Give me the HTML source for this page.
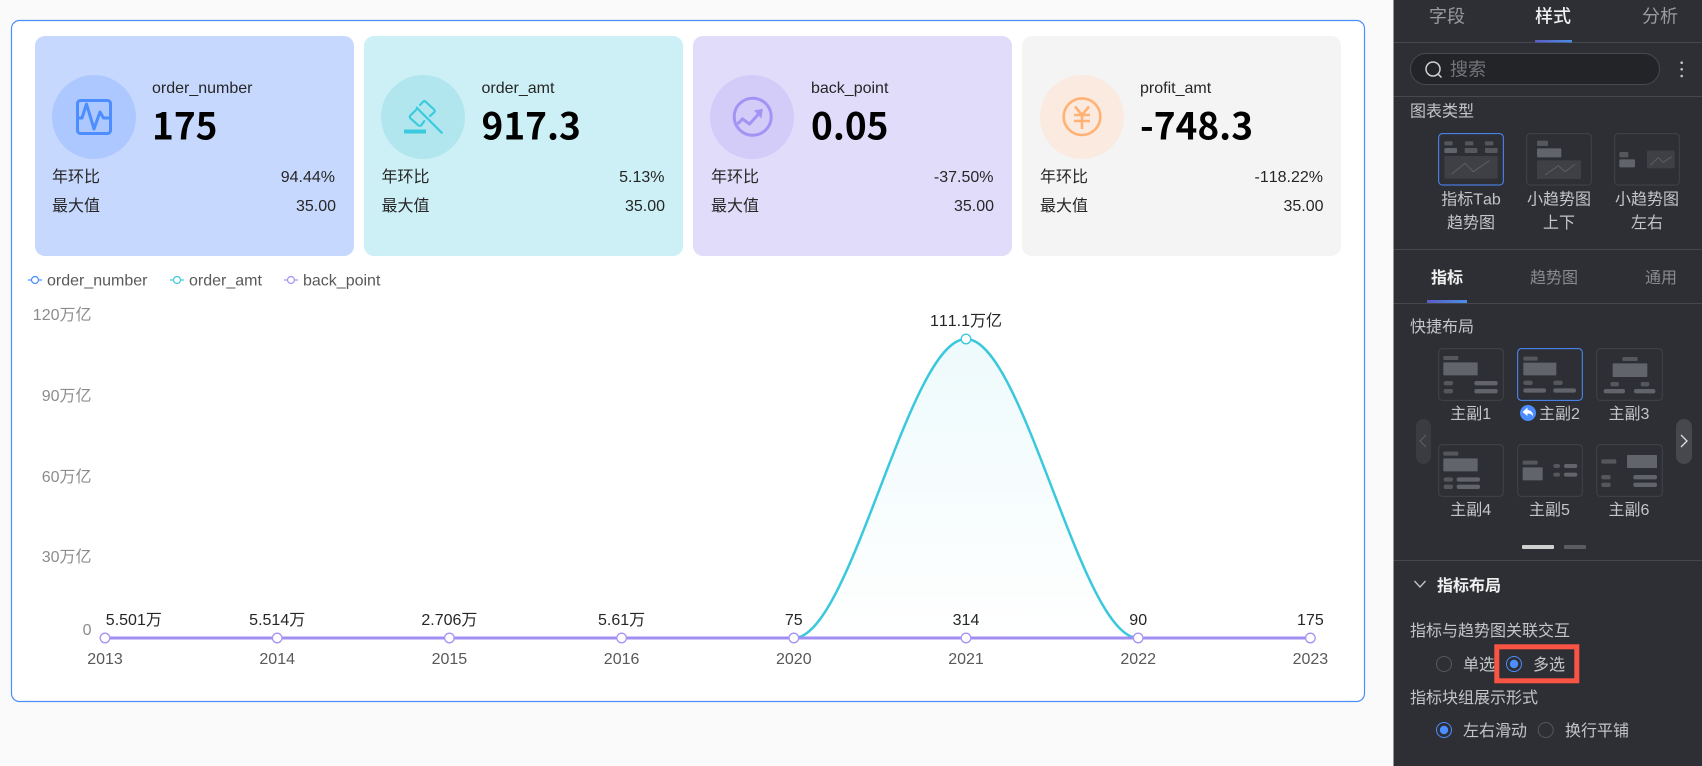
<!DOCTYPE html>
<html lang="zh-CN">
<head>
<meta charset="utf-8">
<title>指标趋势图</title>
<style>
html,body{margin:0;padding:0;width:1702px;height:766px;overflow:hidden;background:#fafafa}
svg{display:block}
text{font-family:"Liberation Sans","Noto Sans CJK SC",sans-serif;font-size:16px;font-kerning:none}
.d{fill:#262626}
.v{font-family:"Noto Sans CJK SC","Liberation Sans",sans-serif;font-size:37px;font-weight:700;fill:#000}
.y{fill:#8c8c8c;text-anchor:end}
.x{fill:#595959;text-anchor:middle}
.l{fill:#262626;text-anchor:middle}
.lg{fill:#595959}
.s{fill:#c4c5c8}
.sc{fill:#c4c5c8;text-anchor:middle}
.th{fill:none;stroke:#414349;stroke-width:3}
.on{fill:none;stroke:#4c8dff;stroke-width:3}
.a{fill:#55575c}
.b{fill:#62646b}
.c{fill:#3e4045}
.ln{fill:none;stroke:#5c5e63;stroke-width:3}
</style>
</head>
<body>
<svg width="1702" height="766" viewBox="0 0 1702 766" xmlns="http://www.w3.org/2000/svg">
<defs>
<linearGradient id="area" x1="0" y1="0" x2="0" y2="1"><stop offset="0" stop-color="#eefafc"/><stop offset="1" stop-color="#ffffff"/></linearGradient>
<linearGradient id="ind" x1="0" y1="0" x2="1" y2="0"><stop offset="0" stop-color="#5a5cc4"/><stop offset="1" stop-color="#4a8ee8"/></linearGradient>
</defs>
<rect width="1702" height="766" fill="#fafafa"/>

<!-- main card -->
<rect x="11.5" y="20.5" width="1353" height="681" rx="8" fill="#fff" stroke="#4c8dff" stroke-width="1.2"/>

<!-- KPI cards -->
<rect x="35" y="36" width="319" height="220" rx="10" fill="#c7d8ff"/>
<rect x="364" y="36" width="319" height="220" rx="10" fill="#ccf0f5"/>
<rect x="693" y="36" width="319" height="220" rx="10" fill="#e2dcfb"/>
<rect x="1022" y="36" width="319" height="220" rx="10" fill="#f4f4f4"/>

<circle cx="94" cy="117" r="42" fill="#adc7ff"/>
<circle cx="423" cy="117" r="42" fill="#b1e6ef"/>
<circle cx="752" cy="117" r="42" fill="#d4ccf8"/>
<circle cx="1082" cy="117" r="42" fill="#fbeae0"/>

<!-- icon 1 -->
<g fill="none" stroke="#4c8dff" stroke-width="3" stroke-linejoin="round" stroke-linecap="round">
<rect x="77.5" y="100.5" width="33" height="33" rx="3"/>
<path d="M78 118h4l4.500-14 7.500 25 6-17 3.500 6h6"/>
</g>
<!-- icon 2 -->
<g fill="none" stroke="#3ccbde" stroke-width="2.200" stroke-linecap="round" stroke-linejoin="round">
<path d="M420 105l2.800-3q1.500-1.500 3-.2l8.200 7.700q1.500 1.500 0 3l-4 3.500"/>
<path d="M416 110l-5.500 5.300q-1.500 1.500 0 3l7.800 7q1.500 1.200 3 0l3-4.300"/>
<path d="M416.700 107.700l25 25"/>
</g>
<rect x="404" y="129.500" width="22" height="4" fill="#3ccbde"/>
<!-- icon 3 -->
<circle cx="752.700" cy="116.700" r="18.500" fill="none" stroke="#a393f5" stroke-width="3"/>
<path d="M737.500 124l5-5 7 5 10-11" fill="none" stroke="#a393f5" stroke-width="3"/>
<path d="M755 110.700l7.300-1.300-1.300 8z" fill="#a393f5" stroke="#a393f5" stroke-width="1"/>
<!-- icon 4 -->
<g fill="none" stroke="#ffb273" stroke-width="2.600">
<circle cx="1082" cy="116.700" r="18.300"/>
<path d="M1075 106.500l7 8.500 7-8.500M1074 115h16M1074 121h16M1082 115v14"/>
</g>

<!-- card text -->
<text x="152" y="93" class="d">order_number</text>
<text x="152" y="139.500" class="v">175</text>
<text x="52" y="182" class="d">年环比</text><text x="335" y="182" class="d" text-anchor="end">94.44%</text>
<text x="52" y="211" class="d">最大值</text><text x="336" y="211" class="d" text-anchor="end">35.00</text>

<text x="481.500" y="93" class="d">order_amt</text>
<text x="481.500" y="139.500" class="v">917.3</text>
<text x="381.500" y="182" class="d">年环比</text><text x="664.500" y="182" class="d" text-anchor="end">5.13%</text>
<text x="381.500" y="211" class="d">最大值</text><text x="665" y="211" class="d" text-anchor="end">35.00</text>

<text x="811" y="93" class="d">back_point</text>
<text x="811" y="139.500" class="v">0.05</text>
<text x="711" y="182" class="d">年环比</text><text x="993.500" y="182" class="d" text-anchor="end">-37.50%</text>
<text x="711" y="211" class="d">最大值</text><text x="994" y="211" class="d" text-anchor="end">35.00</text>

<text x="1140" y="93" class="d">profit_amt</text>
<text x="1140" y="139.500" class="v">-748.3</text>
<text x="1040" y="182" class="d">年环比</text><text x="1323" y="182" class="d" text-anchor="end">-118.22%</text>
<text x="1040" y="211" class="d">最大值</text><text x="1323.500" y="211" class="d" text-anchor="end">35.00</text>

<!-- legend -->
<g fill="#fff" stroke-width="1.200">
<path d="M28 280h14" stroke="#4c8dff"/><circle cx="35" cy="280" r="3.500" stroke="#4c8dff"/>
<path d="M170 280h14" stroke="#3ccbde"/><circle cx="177" cy="280" r="3.500" stroke="#3ccbde"/>
<path d="M284 280h14" stroke="#a393f5"/><circle cx="291" cy="280" r="3.500" stroke="#a393f5"/>
</g>
<text x="47" y="285.500" class="lg">order_number</text>
<text x="189" y="285.500" class="lg">order_amt</text>
<text x="303" y="285.500" class="lg">back_point</text>

<!-- y axis -->
<text x="91.500" y="320" class="y">120万亿</text>
<text x="91.500" y="401" class="y">90万亿</text>
<text x="91.500" y="482" class="y">60万亿</text>
<text x="91.500" y="562" class="y">30万亿</text>
<text x="91.500" y="635" class="y">0</text>

<!-- chart -->
<path d="M793.800 638C851 638 908.500 339 966 339C1023.500 339 1081 638 1138.200 638Z" fill="url(#area)"/>
<path d="M793.800 638C851 638 908.500 339 966 339C1023.500 339 1081 638 1138.200 638" fill="none" stroke="#3ac8dc" stroke-width="2.500"/>
<path d="M105 638H1310.400" stroke="#a08ef2" stroke-width="3" fill="none"/>
<g fill="#fff" stroke="#a793f5" stroke-width="1.300">
<circle cx="105" cy="638" r="4.800"/><circle cx="277.200" cy="638" r="4.800"/><circle cx="449.400" cy="638" r="4.800"/><circle cx="621.600" cy="638" r="4.800"/><circle cx="793.800" cy="638" r="4.800"/><circle cx="966" cy="638" r="4.800"/><circle cx="1138.200" cy="638" r="4.800"/><circle cx="1310.400" cy="638" r="4.800"/>
</g>
<circle cx="966" cy="339" r="4.800" fill="#fff" stroke="#3ac8dc" stroke-width="1.300"/>

<text x="105.800" y="625" class="d">5.501万</text>
<text x="277.200" y="625" class="l">5.514万</text>
<text x="449.400" y="625" class="l">2.706万</text>
<text x="621.600" y="625" class="l">5.61万</text>
<text x="793.800" y="625" class="l">75</text>
<text x="966" y="625" class="l">314</text>
<text x="1138.200" y="625" class="l">90</text>
<text x="1310.400" y="625" class="l">175</text>
<text x="966" y="326" class="l">111.1万亿</text>

<text x="105" y="664" class="x">2013</text>
<text x="277.200" y="664" class="x">2014</text>
<text x="449.400" y="664" class="x">2015</text>
<text x="621.600" y="664" class="x">2016</text>
<text x="793.800" y="664" class="x">2020</text>
<text x="966" y="664" class="x">2021</text>
<text x="1138.200" y="664" class="x">2022</text>
<text x="1310.400" y="664" class="x">2023</text>

<!-- sidebar -->
<rect x="1393.500" y="0" width="308.500" height="766" fill="#2e2f34"/>
<g fill="#46484d">
<rect x="1393.500" y="42" width="308.500" height="1"/>
<rect x="1393.500" y="96" width="308.500" height="1"/>
<rect x="1393.500" y="249" width="308.500" height="1"/>
<rect x="1393.500" y="303" width="308.500" height="1"/>
<rect x="1393.500" y="560" width="308.500" height="1"/>
</g>
<text x="1429" y="22.500" style="font-size:18px;fill:#9a9b9e">字段</text>
<text x="1535" y="22.500" style="font-size:18px;font-weight:500;fill:#f0f0f0">样式</text>
<text x="1642" y="22.500" style="font-size:18px;fill:#9a9b9e">分析</text>
<rect x="1535" y="40" width="37" height="2.500" fill="url(#ind)"/>

<rect x="1410.500" y="53.500" width="249" height="31" rx="15.500" fill="#232428" stroke="#48494e"/>
<circle cx="1433" cy="69" r="7" fill="none" stroke="#d0d0d0" stroke-width="1.500"/>
<path d="M1438 74l3.500 3.500" stroke="#d0d0d0" stroke-width="1.500"/>
<text x="1450" y="75.500" style="font-size:18px;fill:#74757a">搜索</text>
<g fill="#c4c5c8"><circle cx="1681.700" cy="62.700" r="1.300"/><circle cx="1681.700" cy="69.300" r="1.300"/><circle cx="1681.700" cy="76" r="1.300"/></g>

<text x="1410" y="116.500" class="s">图表类型</text>

<g transform="translate(1390,0) scale(.33333)">
<rect x="146" y="401" width="194" height="154" rx="11" class="on"/>
<rect x="163" y="424" width="25" height="12" rx="3" class="a"/><rect x="225" y="424" width="25" height="12" rx="3" class="a"/><rect x="285" y="424" width="25" height="12" rx="3" class="a"/>
<rect x="163" y="444" width="38" height="15" rx="3" class="b"/><rect x="224" y="444" width="38" height="15" rx="3" class="a"/><rect x="285" y="444" width="38" height="15" rx="3" class="a"/>
<rect x="163" y="468" width="160" height="68" rx="3" class="c"/><path d="M185 522l40-32 25 25 48-33" class="ln"/>

<rect x="410" y="401" width="194" height="154" rx="11" class="th"/>
<rect x="441" y="422" width="33" height="16" rx="3" class="a"/>
<rect x="441" y="445" width="73" height="27" rx="3" class="b"/>
<rect x="441" y="481" width="132" height="56" rx="3" class="c"/><path d="M465 525l40-28 20 18 30-22" class="ln"/>

<rect x="674" y="401" width="194" height="154" rx="11" class="th"/>
<rect x="688" y="456" width="27" height="16" rx="3" class="a"/>
<rect x="688" y="478" width="47" height="24" rx="3" class="b"/>
<rect x="771" y="452" width="83" height="53" rx="3" class="c"/><path d="M781 495l24-22 15 14 25-17" class="ln"/>
</g>

<text x="1471" y="204.500" class="sc">指标Tab</text>
<text x="1471" y="228" class="sc">趋势图</text>
<text x="1559" y="204.500" class="sc">小趋势图</text>
<text x="1559" y="228" class="sc">上下</text>
<text x="1647" y="204.500" class="sc">小趋势图</text>
<text x="1647" y="228" class="sc">左右</text>

<text x="1431" y="283" style="font-weight:700;fill:#f0f0f0">指标</text>
<text x="1530" y="283" style="fill:#8a8b8e">趋势图</text>
<text x="1645" y="283" style="fill:#8a8b8e">通用</text>
<rect x="1427" y="300" width="40" height="3" fill="url(#ind)"/>

<text x="1410" y="332" class="s">快捷布局</text>

<g transform="translate(1390,250) scale(.33333)">
<rect x="146" y="296" width="194" height="155" rx="11" class="th"/>
<rect x="160" y="318" width="45" height="12" rx="3" class="a"/><rect x="160" y="337" width="103" height="39" rx="2" class="b"/>
<rect x="161" y="393" width="28" height="13" rx="6" class="a"/><rect x="161" y="417" width="28" height="13" rx="6" class="a"/>
<rect x="253" y="393" width="70" height="13" rx="6" class="b"/><rect x="253" y="417" width="70" height="13" rx="6" class="b"/>

<rect x="383" y="296" width="194" height="155" rx="11" class="on"/>
<rect x="400" y="320" width="43" height="12" rx="3" class="a"/><rect x="400" y="338" width="99" height="38" rx="2" class="b"/>
<rect x="400" y="392" width="28" height="13" rx="6" class="a"/><rect x="490" y="392" width="28" height="13" rx="6" class="a"/>
<rect x="400" y="415" width="68" height="13" rx="6" class="b"/><rect x="490" y="415" width="68" height="13" rx="6" class="b"/>

<rect x="620" y="296" width="197" height="155" rx="11" class="th"/>
<rect x="697" y="321" width="46" height="12" rx="3" class="a"/><rect x="668" y="340" width="104" height="41" rx="2" class="b"/>
<rect x="661" y="396" width="26" height="13" rx="6" class="a"/><rect x="752" y="396" width="26" height="13" rx="6" class="a"/>
<rect x="641" y="417" width="64" height="13" rx="6" class="b"/><rect x="732" y="417" width="64" height="13" rx="6" class="b"/>

<rect x="146" y="584" width="194" height="155" rx="11" class="th"/>
<rect x="160" y="605" width="45" height="12" rx="3" class="a"/><rect x="160" y="625" width="103" height="39" rx="2" class="b"/>
<rect x="161" y="682" width="28" height="13" rx="6" class="a"/><rect x="200" y="682" width="70" height="13" rx="6" class="b"/>
<rect x="161" y="704" width="28" height="13" rx="6" class="a"/><rect x="200" y="704" width="70" height="13" rx="6" class="b"/>

<rect x="383" y="584" width="194" height="155" rx="11" class="th"/>
<rect x="398" y="632" width="45" height="12" rx="3" class="a"/><rect x="398" y="652" width="60" height="39" rx="2" class="b"/>
<rect x="490" y="642" width="20" height="12" rx="6" class="a"/><rect x="522" y="642" width="40" height="12" rx="6" class="b"/>
<rect x="490" y="668" width="20" height="12" rx="6" class="a"/><rect x="522" y="668" width="40" height="12" rx="6" class="b"/>

<rect x="620" y="584" width="197" height="155" rx="11" class="th"/>
<rect x="634" y="628" width="45" height="13" rx="3" class="a"/><rect x="711" y="615" width="90" height="39" rx="2" class="b"/>
<rect x="634" y="675" width="28" height="13" rx="6" class="a"/><rect x="730" y="675" width="71" height="13" rx="6" class="b"/>
<rect x="634" y="698" width="28" height="13" rx="6" class="a"/><rect x="730" y="698" width="71" height="13" rx="6" class="b"/>
</g>

<text x="1470.700" y="419" class="sc">主副1</text>
<circle cx="1528" cy="413" r="8" fill="#4c8dff"/>
<path d="M1527.500 407.500l-5 4.500 5 4v-2.500c2.500 0 4.500 .5 5.500 3 .2-3.500-1.500-6-5.500-6.500z" fill="#fff"/>
<text x="1539" y="419" class="s">主副2</text>
<text x="1629" y="419" class="sc">主副3</text>
<text x="1470.700" y="515" class="sc">主副4</text>
<text x="1549.500" y="515" class="sc">主副5</text>
<text x="1629" y="515" class="sc">主副6</text>

<rect x="1416" y="419" width="15" height="45" rx="7.500" fill="#3a3c41"/>
<path d="M1426 435l-6 6 6 6" fill="none" stroke="#5c5e63" stroke-width="1.200"/>
<rect x="1676" y="419" width="16" height="45" rx="8" fill="#46484d"/>
<path d="M1681 435l6 6-6 6" fill="none" stroke="#e0e0e0" stroke-width="1.300"/>

<rect x="1522" y="545" width="32" height="4" rx="1" fill="#cfcfcf"/>
<rect x="1564" y="545" width="22" height="4" rx="1" fill="#5a5c62"/>

<path d="M1414.500 581l5.500 6 5.500-6" fill="none" stroke="#c4c5c8" stroke-width="1.300"/>
<text x="1437" y="591" style="font-weight:700;fill:#f0f0f0">指标布局</text>

<text x="1410" y="636" class="s">指标与趋势图关联交互</text>

<circle cx="1444" cy="664" r="7.500" fill="none" stroke="#55575c" stroke-width="1"/>
<text x="1463" y="670" class="s">单选</text>

<rect x="1496.800" y="646.800" width="80" height="34" fill="none" stroke="#fa5445" stroke-width="5"/>
<circle cx="1514" cy="664" r="7.500" fill="none" stroke="#4c8dff" stroke-width="1"/>
<circle cx="1514" cy="664" r="4.200" fill="#4c8dff"/>
<text x="1533" y="670" class="s">多选</text>

<text x="1410" y="703" class="s">指标块组展示形式</text>

<circle cx="1444" cy="730" r="7.500" fill="none" stroke="#4c8dff" stroke-width="1"/>
<circle cx="1444" cy="730" r="4.200" fill="#4c8dff"/>
<text x="1463" y="736" class="s">左右滑动</text>
<circle cx="1545.700" cy="730" r="7.500" fill="none" stroke="#55575c" stroke-width="1"/>
<text x="1565" y="736" class="s">换行平铺</text>
</svg>
</body>
</html>
